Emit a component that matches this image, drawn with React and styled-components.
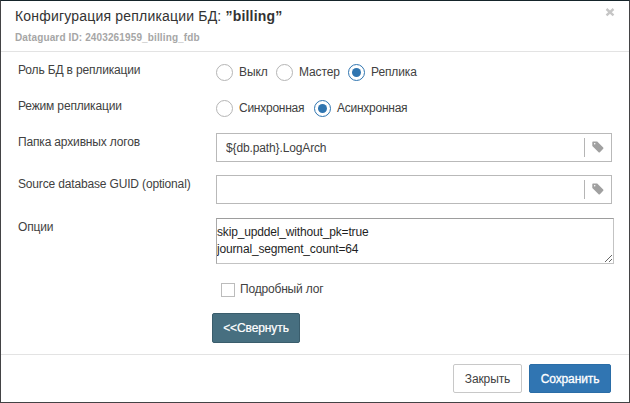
import React from "react";
import styled, { createGlobalStyle } from "styled-components";

const GlobalStyle = createGlobalStyle`
  * { box-sizing: border-box; }
  body { margin: 0; background: #3c3c3e; overflow: hidden; }
  body, input, textarea, button { font-family: "Liberation Sans", Arial, sans-serif; font-size: 12px; color: #414141; }
`;

const Dialog = styled.section`
  display: flex;
  flex-direction: column;
  width: 630px;
  height: 403px;
  border: 1px solid #434345;
  border-top-color: #15242a;
  background: #fff;
`;

const Header = styled.header`
  display: flex;
  justify-content: space-between;
  height: 51px;
  padding: 6px 14px 0;
  border-bottom: 1px solid #e3e3e3;
`;

const Title = styled.h1`
  margin: 0;
  font-size: 14px;
  line-height: 19px;
  font-weight: 400;
  letter-spacing: 0.19px;
  color: #333;
`;

const Subtitle = styled.div`
  margin-top: 5px;
  font-size: 10px;
  line-height: 14px;
  font-weight: 700;
  letter-spacing: 0.13px;
  color: #a6a6a6;
`;

const CloseButton = styled.button`
  display: flex;
  width: 10px;
  height: 10px;
  padding: 0;
  border: 0;
  background: none;
`;

const Body = styled.main`
  height: 303px;
  padding: 11px 15px 0 17px;
`;

const Row = styled.div`
  display: grid;
  grid-template-columns: 198px 1fr;
  height: ${(p) => p.$height}px;
`;

const Label = styled.label`
  padding-top: ${(p) => (p.$low ? 1 : 0)}px;
  line-height: ${(p) => (p.$low ? 16 : 14)}px;
  letter-spacing: -0.16px;
`;

const Choices = styled.div`
  display: flex;
  align-items: flex-start;
  padding-top: 1px;
`;

const Choice = styled.label`
  display: flex;
  align-items: center;
  gap: 6px;
  width: ${(p) => p.$width}px;
  height: 17px;
  line-height: 17px;
  white-space: nowrap;
  letter-spacing: ${(p) => (p.$tight ? "-0.25px" : "-0.1px")};
`;

const Radio = styled.span`
  display: grid;
  flex: none;
  place-items: center;
  width: 17px;
  height: 17px;
  border: 1px solid ${(p) => (p.$on ? "#2f75b0" : "#b5b5b5")};
  border-radius: 50%;
  &::after {
    content: "";
    width: 9px;
    height: 9px;
    border-radius: 50%;
    background: ${(p) => (p.$on ? "#2f75b0" : "transparent")};
  }
`;

const Field = styled.div`
  display: flex;
  align-items: center;
  width: 396px;
  height: 29px;
  border: 1px solid #b9b9b9;
`;

const Input = styled.input`
  flex: 1;
  min-width: 0;
  height: 27px;
  padding: 2px 9px 0;
  border: 0;
  outline: 0;
  background: none;
  letter-spacing: -0.13px;
`;

const TagAddon = styled.span`
  display: flex;
  align-items: center;
  justify-content: center;
  width: 27px;
  height: 19px;
  border-left: 1px solid #b5b5b5;
`;

const Options = styled.textarea`
  display: block;
  width: 398px;
  height: 46px;
  padding: 5px 0 0;
  border: 1px solid #c3c3c3;
  border-top-color: #9d9d9d;
  border-left-color: #a9a9a9;
  outline: 0;
  overflow: hidden;
  resize: both;
  line-height: 17px;
  letter-spacing: -0.16px;
  color: #1f1f1f;
`;

const CheckLine = styled.label`
  display: flex;
  gap: 5px;
  height: 16px;
  margin-left: 203px;
  line-height: 17px;
  letter-spacing: -0.18px;
`;

const Checkbox = styled.span`
  width: 14px;
  height: 14px;
  margin-top: 2px;
  border: 1px solid #bcbcbc;
`;

const Button = styled.button`
  width: ${(p) => p.$width}px;
  height: 29px;
  padding: 0;
  border: 1px solid ${(p) => (p.$primary ? "#2a6da7" : "#c8c8c8")};
  border-radius: 2px;
  background: ${(p) => (p.$primary ? "#3075b2" : "#fff")};
  color: ${(p) => (p.$primary ? "#fff" : "#414141")};
  letter-spacing: -0.1px;
  -webkit-text-stroke: ${(p) => (p.$primary ? "0.3px #fff" : "0")};
`;

const CollapseButton = styled(Button)`
  display: block;
  height: 30px;
  margin: 16px 0 0 194px;
  border-color: #3a5d6c;
  background: #476f80;
  color: #fff;
  -webkit-text-stroke: 0.2px #fff;
`;

const Footer = styled.footer`
  display: flex;
  justify-content: flex-end;
  gap: 7px;
  height: 48px;
  padding: 9px 18px 0;
  border-top: 1px solid #e3e3e3;
`;

const Tag = () => (
  <svg width="12" height="12" viewBox="0 0 12 12">
    <path fill="#a0a0a0" fillRule="evenodd" d="M1 .5h4.2l6 6c.4.4.4.9 0 1.3L7.9 11.2c-.4.4-.9.4-1.3 0L.3 5.1V1.2C.3.8.6.5 1 .5Zm1.7 1.4a.8.8 0 1 0 0 1.6.8.8 0 0 0 0-1.6Z" />
  </svg>
);

const RadioChoice = ({ on, tight, width, children }) => (
  <Choice $width={width} $tight={tight}>
    <Radio $on={on} />
    {children}
  </Choice>
);

const TagField = ({ value }) => (
  <Field>
    <Input defaultValue={value} />
    <TagAddon><Tag /></TagAddon>
  </Field>
);

export default function App() {
  return (
    <>
      <GlobalStyle />
      <Dialog>
        <Header>
          <div>
            <Title>Конфигурация репликации БД: <b>”billing”</b></Title>
            <Subtitle>Dataguard ID: 2403261959_billing_fdb</Subtitle>
          </div>
          <CloseButton aria-label="Закрыть">
            <svg width="10" height="10" viewBox="0 0 10 10">
              <path d="M1.5 2 8.5 8.3M8.5 2 1.5 8.3" stroke="#c6c6c6" strokeWidth="2.4" />
            </svg>
          </CloseButton>
        </Header>
        <Body>
          <Row $height={36}>
            <Label>Роль БД в репликации</Label>
            <Choices>
              <RadioChoice width={60}>Выкл</RadioChoice>
              <RadioChoice width={72}>Мастер</RadioChoice>
              <RadioChoice on>Реплика</RadioChoice>
            </Choices>
          </Row>
          <Row $height={34}>
            <Label>Режим репликации</Label>
            <Choices>
              <RadioChoice width={98} tight>Синхронная</RadioChoice>
              <RadioChoice on tight>Асинхронная</RadioChoice>
            </Choices>
          </Row>
          <Row $height={42}>
            <Label $low>Папка архивных логов</Label>
            <TagField value="${db.path}.LogArch" />
          </Row>
          <Row $height={43}>
            <Label $low>Source database GUID (optional)</Label>
            <TagField value="" />
          </Row>
          <Row $height={63}>
            <Label $low>Опции</Label>
            <Options spellCheck={false} defaultValue={"skip_upddel_without_pk=true\njournal_segment_count=64"} />
          </Row>
          <CheckLine><Checkbox />Подробный лог</CheckLine>
          <CollapseButton $width={88}>&lt;&lt;Свернуть</CollapseButton>
        </Body>
        <Footer>
          <Button $width={69}>Закрыть</Button>
          <Button $width={82} $primary>Сохранить</Button>
        </Footer>
      </Dialog>
    </>
  );
}
